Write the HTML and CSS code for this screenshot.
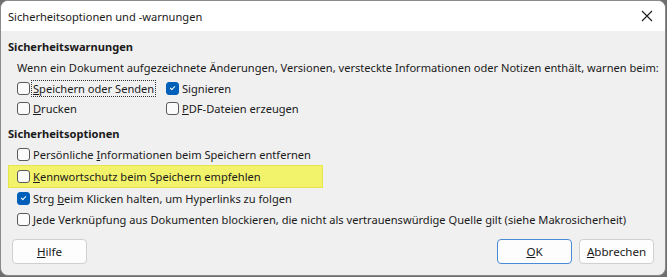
FILE: index.html
```html
<!DOCTYPE html>
<html lang="de">

<head>
    <meta charset="UTF-8">
    <meta name="viewport" content="width=device-width, initial-scale=1.0">
    <title>Sicherheitsoptionen und -warnungen</title>
    <link rel="stylesheet" href="styles.css">
</head>

<body>
    <div class="window">
        <div class="titlebar">
            <span class="title">Sicherheitsoptionen und -warnungen</span>
            <span class="close">
                <svg width="12" height="12" viewBox="0 0 12 12">
                    <path d="M1 1 L11 11 M11 1 L1 11" stroke="#1a1a1a" stroke-width="1.1" fill="none" />
                </svg>
            </span>
        </div>

        <div class="content">
            <div class="section-title">Sicherheitswarnungen</div>
            <div class="section">
                <div class="intro">Wenn ein Dokument aufgezeichnete Änderungen, Versionen, versteckte Informationen oder Notizen enthält, warnen beim:</div>
                <div class="grid">
                    <label class="check"><span class="box"></span><span class="focus"><u>S</u>peichern oder Senden</span></label>
                    <label class="check"><span class="box checked"></span><span>Signieren</span></label>
                    <label class="check"><span class="box"></span><span><u>D</u>rucken</span></label>
                    <label class="check"><span class="box"></span><span><u>P</u>DF-Dateien erzeugen</span></label>
                </div>
            </div>

            <div class="section-title second">Sicherheitsoptionen</div>
            <div class="section options">
                <label class="check"><span class="box"></span><span>Persönliche <u>I</u>nformationen beim Speichern entfernen</span></label>
                <label class="check highlight"><span class="box"></span><span><u>K</u>ennwortschutz beim Speichern empfehlen</span></label>
                <label class="check"><span class="box checked"></span><span>Strg <u>b</u>eim Klicken halten, um Hyperlinks zu folgen</span></label>
                <label class="check"><span class="box"></span><span><u>J</u>ede Verknüpfung aus Dokumenten blockieren, die nicht als vertrauenswürdige Quelle gilt (siehe Makrosicherheit)</span></label>
            </div>
        </div>

        <div class="buttons">
            <button class="btn"><u>H</u>ilfe</button>
            <div class="spacer"></div>
            <button class="btn default"><u>O</u>K</button>
            <button class="btn"><u>A</u>bbrechen</button>
        </div>
    </div>
</body>

</html>
```
FILE: styles.css
```css
* {
    margin: 0;
    padding: 0;
    box-sizing: border-box;
    font-family: "Noto Sans", "Open Sans", sans-serif;
}

body {
    width: 667px;
    height: 277px;
    background-color: #6e6e6e;
    font-size: 11.1px;
    color: #1a1a1a;
    overflow: hidden;
}

.window {
    width: 666px;
    height: 276px;
    background: #f0f0f0;
    border: 1px solid #8a8a8a;
    border-radius: 8px;
    overflow: hidden;
    display: flex;
    flex-direction: column;
}

.titlebar {
    height: 30px;
    background: white;
    display: flex;
    align-items: center;
    justify-content: space-between;
    padding: 0 0 0 7px;
}

.title {
    font-size: 11.1px;
}

.close {
    width: 36px;
    height: 30px;
    display: flex;
    align-items: center;
    justify-content: center;
}

.content {
    padding: 6px 7px 0 7px;
    flex: 1;
}

.section-title {
    font-weight: bold;
    height: 20px;
    line-height: 20px;
}

.section-title.second {
    margin-top: 6px;
}

.section {
    padding-left: 9px;
}

.intro {
    height: 21px;
    line-height: 21px;
    white-space: nowrap;
}

.grid {
    display: grid;
    grid-template-columns: 149px auto;
}

.check {
    display: flex;
    align-items: center;
    height: 20px;
    white-space: nowrap;
}

.box {
    width: 13px;
    height: 13px;
    border: 1px solid #5a5a5a;
    border-radius: 3px;
    background: #fbfbfb;
    margin-right: 3px;
    flex-shrink: 0;
    position: relative;
}

.box.checked {
    background: #005fb8;
    border-color: #005fb8;
}

.box.checked::after {
    content: "";
    position: absolute;
    left: 4px;
    top: 2px;
    width: 2px;
    height: 4px;
    border: solid white;
    border-width: 0 1px 1px 0;
    transform: rotate(45deg);
}

.focus {
    outline: 1px dotted #333;
    padding: 0 1px;
    margin-left: -1px;
}

.options .check {
    height: 21px;
}

.check.highlight {
    margin-left: -9px;
    padding-left: 8px;
    width: 315px;
    height: 23px;
    background: #f3f36b;
    border: 1px solid #e6e64a;
}

.buttons {
    display: flex;
    align-items: center;
    gap: 7px;
    padding: 0 11px 11px 11px;
}

.spacer {
    flex: 1;
}

.btn {
    width: 75px;
    height: 25px;
    background: #fdfdfd;
    border: 1px solid #d0d0d0;
    border-radius: 4px;
    font-size: 11.6px;
    color: #1a1a1a;
}

.btn.default {
    border-color: #4a8ad4;
}
```
